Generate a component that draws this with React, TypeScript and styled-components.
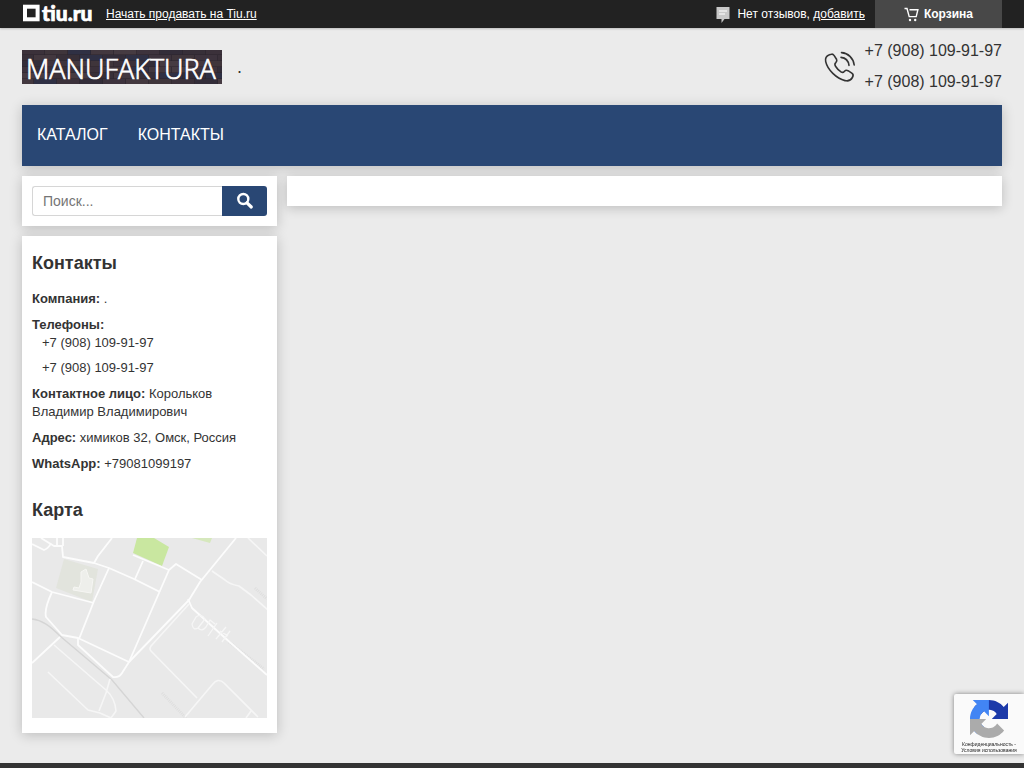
import React from 'react';
import styled, { createGlobalStyle } from 'styled-components';

const GlobalStyle = createGlobalStyle`
  *, *::before, *::after { box-sizing: border-box; }
  body {
    margin: 0;
    background: #ebebeb;
    color: #333;
    font: 13px/18px "Liberation Sans", Arial, sans-serif;
  }
  h2, p, ul { margin: 0; padding: 0; }
  ul { list-style: none; }
  svg { display: block; flex: none; overflow: visible; }
`;

const Page = styled.div`
  display: flex;
  flex-direction: column;
  min-height: 100vh;
`;

const TopBar = styled.div`
  display: flex;
  align-items: center;
  height: 28px;
  padding: 0 22px;
  background: #222;
  color: #fff;
  font-size: 12px;
  box-shadow: 0 1px 2px rgba(0, 0, 0, 0.2);
`;

const TopLink = styled.a`
  color: #fff;
  text-decoration: underline;
`;

const PortalLink = styled.a`
  margin-right: 12px;
`;

const Reviews = styled.div`
  display: flex;
  align-items: center;
  gap: 7px;
  margin-left: auto;
  margin-right: 10px;
`;

const Basket = styled.button`
  display: flex;
  align-items: center;
  justify-content: center;
  gap: 5px;
  width: 127px;
  height: 28px;
  padding: 0;
  border: 0;
  background: #484848;
  color: #fff;
  font: bold 12px "Liberation Sans", Arial, sans-serif;
`;

const Container = styled.div`
  flex: 1;
  padding: 0 22px 30px;
`;

const Header = styled.header`
  display: flex;
  align-items: center;
  height: 77px;
`;

const CompanyName = styled.span`
  margin-left: 15px;
  font-size: 18px;
  line-height: 20px;
`;

const HeaderPhones = styled.div`
  display: flex;
  align-items: center;
  gap: 9px;
  margin-left: auto;
  font-size: 16px;
  line-height: 31px;
`;

const HeaderPhoneList = styled.ul`
  padding-bottom: 2px;
`;

const Nav = styled.nav`
  display: flex;
  height: 61px;
  background: #294774;
  box-shadow: 0 2px 12px rgba(0, 0, 0, 0.2);
`;

const NavLink = styled.a`
  padding: 0 15px;
  color: #fff;
  font-size: 16px;
  line-height: 60px;
  text-decoration: none;
  text-transform: uppercase;
`;

const Columns = styled.div`
  display: flex;
  align-items: flex-start;
  gap: 10px;
  margin-top: 10px;
`;

const Sidebar = styled.aside`
  display: flex;
  flex-direction: column;
  gap: 10px;
  flex: 0 0 255px;
  min-width: 0;
`;

const Card = styled.section`
  padding: 10px;
  background: #fff;
  box-shadow: 0 2px 12px rgba(0, 0, 0, 0.2);
`;

const Content = styled.main`
  flex: 1;
  min-height: 30px;
  background: #fff;
  box-shadow: 0 2px 12px rgba(0, 0, 0, 0.2);
`;

const SearchForm = styled.form`
  display: flex;
  height: 30px;
`;

const SearchInput = styled.input`
  flex: 1;
  min-width: 0;
  padding: 0 10px;
  border: 1px solid #d6d6d6;
  border-right: 0;
  border-radius: 3px 0 0 3px;
  font: 14px "Liberation Sans", Arial, sans-serif;
  &::placeholder { color: #757575; }
`;

const SearchButton = styled.button`
  display: flex;
  align-items: center;
  justify-content: center;
  width: 45px;
  padding: 0;
  border: 0;
  border-radius: 0 3px 3px 0;
  background: #294774;
`;

const InfoCard = styled(Card)`
  padding-bottom: 15px;
`;

const Title = styled.h2`
  padding: 5px 0;
  font-size: 18px;
  line-height: 24px;
`;

const Details = styled.div`
  display: flex;
  flex-direction: column;
  gap: 8px;
  padding: 10px 0 20px;
`;

const PhoneList = styled.ul`
  display: flex;
  flex-direction: column;
  gap: 7px;
  padding-left: 10px;
`;

const MapBox = styled.div`
  margin-top: 11px;
  overflow: hidden;
  svg { width: 100%; height: 180px; }
`;

const Footer = styled.footer`
  height: 5px;
  background: #333;
`;

const Captcha = styled.div`
  position: fixed;
  right: 0;
  bottom: 14px;
  display: flex;
  flex-direction: column;
  align-items: center;
  width: 70px;
  height: 60px;
  padding-top: 6px;
  border-radius: 2px 0 0 2px;
  background: #fafafa;
  box-shadow: 0 0 5px #808080;
`;

const CaptchaTerms = styled.div`
  margin-top: 3px;
  font: 5px/6px "Liberation Sans", Arial, sans-serif;
  text-align: center;
  white-space: nowrap;
  color: #222;
`;

const TiuLogo = () => (
  <svg width="72" height="28" viewBox="0 0 72 28" role="img" aria-label="tiu.ru">
    <rect x="3" y="6.7" width="12.6" height="12.6" fill="none" stroke="#fff" strokeWidth="4" />
    <text x="20" y="21" fill="#fff" stroke="#fff" strokeWidth="0.7" fontFamily="Lato, sans-serif" fontWeight="900" fontSize="21">tiu.ru</text>
  </svg>
);

const brickColors = ['#3b313a', '#43383f', '#332d39', '#3f353b', '#463b42', '#372f38', '#2f3044', '#3d333d'];

const ShopLogo = () => (
  <svg width="200" height="34" viewBox="0 0 200 34" role="img" aria-label="Manufaktura">
    <clipPath id="wall"><rect width="200" height="34" /></clipPath>
    <g clipPath="url(#wall)">
      <rect width="200" height="34" fill="#2c252d" />
      {Array.from({ length: 6 }, (_, row) =>
        Array.from({ length: 10 }, (_, col) => (
          <rect
            key={`${row}-${col}`}
            x={col * 23 - (row % 2) * 11}
            y={row * 6 - 1}
            width="22.4"
            height="5.5"
            fill={brickColors[(row * 5 + col * 3 + ((row * col) % 3)) % brickColors.length]}
          />
        )),
      )}
    </g>
    <text x="4" y="29" fill="#fff" fontFamily="'Open Sans', 'Noto Sans', sans-serif" fontWeight="300" fontSize="27" stroke="#fff" strokeWidth="0.7">MANUFAKTURA</text>
  </svg>
);

const BubbleIcon = () => (
  <svg width="14" height="18" viewBox="0 0 14 18" aria-hidden="true">
    <path d="M0.5 2H13.5V14H8.5L5.5 18V14H0.5z" fill="#c8c8c8" />
    <path d="M3 6h8M3 9h6" stroke="#fff" strokeWidth="1.2" />
  </svg>
);

const CartIcon = () => (
  <svg width="15" height="15" viewBox="0 0 15 15" fill="none" stroke="#fff" aria-hidden="true">
    <path d="M0.5 1.5H3L5.2 9.6H12.2L13.9 2.7H5.5" strokeWidth="1.4" />
    <circle cx="6" cy="13" r="1.2" fill="#fff" stroke="none" />
    <circle cx="11.2" cy="13" r="1.2" fill="#fff" stroke="none" />
  </svg>
);

const PhoneIcon = () => (
  <svg width="32" height="32" viewBox="0 0 32 32" fill="none" stroke="#333" strokeWidth="1.6" strokeLinecap="round" strokeLinejoin="round" aria-hidden="true">
    <path d="M7.5 3.2C8.6 3 9.5 3.6 10.2 4.6L12.5 8.2C13.3 9.8 12.8 10.8 11.8 11.7C10.4 12.9 10.6 13.8 11.5 15.2C13 17.6 15 19.7 17.3 21.1C18.5 21.8 19.4 21.5 20.5 20.2C21.6 19 22.6 18.9 24 19.7L27.8 22.2C29.5 23.3 29.5 24.7 28.4 26.5C26.8 29.3 24.3 30.5 21 29.6C12.5 27.6 3.5 18.8 1.7 10.7C1 7.3 2.4 4.8 5.4 3.7C6.1 3.4 6.8 3.2 7.5 3.2Z" />
    <path d="M17.5 1.6C24 2 29.4 7 30.2 14M17 6.4C21.2 6.8 24.4 9.9 25 14.4" />
  </svg>
);

const SearchIcon = () => (
  <svg width="16" height="16" viewBox="0 0 16 16" fill="none" stroke="#fff" aria-hidden="true">
    <circle cx="6.3" cy="6" r="5" strokeWidth="2.4" />
    <path d="M10 9.8l4.3 4.2" strokeWidth="3.2" strokeLinecap="round" />
  </svg>
);

const CityMap = () => (
  <svg viewBox="0 0 235 180" preserveAspectRatio="xMidYMid slice" role="img" aria-label="Карта">
    <rect width="235" height="180" fill="#e9e9e9" />
    <path d="M105 0h17l15 9-7 19-29-13z" fill="#c9e7a0" />
    <path d="M160 0h20l-2 5z" fill="#d6e8bd" />
    <path d="M32 21L66 31 60 64 24 50z" fill="#e2e4dd" />
    <path d="M49 34l5-3 3 9 4 1-2 14-18-3 1-3 5 1 2-6z" fill="#eeefeb" stroke="#f6f6f3" />
    <path d="M0 81C10 82 18 88 28 98L80 142 112 180" fill="none" stroke="#d5d5d5" strokeWidth="1.4" />
    <path d="M130 155l24 25M223 50l12 11M197 104l35 27" fill="none" stroke="#dedede" strokeWidth="3" strokeDasharray="1 1" />
    <g fill="none" stroke="#fcfcfc" strokeWidth="1.8" strokeLinejoin="round">
      <path d="M0 6l12 6q5-2 7-7M9 0l13 8h8l1 11 31 6 15 5 25 11 26 13" />
      <path d="M25 0v7M31 0v8M80 0L66 18 62 25M77 30L62 63 47 101M62 65L20 54 0 44M20 54Q12 71 14 79L30 97 46 100 97 124" />
      <path d="M46 101v6L81 139q6 1 9-4l7-11 40-92 7-6 26 16" />
      <path d="M111 23l-8 18M101 17l36 15M28 99L0 125M97 124l60-62 11-18 36-44" />
      <path d="M156 61l4 9 32 29 43 38" />
    </g>
    <g fill="none" stroke="#f6f6f6" strokeWidth="1.6" strokeLinejoin="round">
      <path d="M157 66l-38 42q-2 3 0 5l46 47M153 179l27-32q6-8 12-2l34 34M214 180l5-7" />
      <path d="M180 33l13 9q4 4 14 6l12 9 17 15M216 0l19 18" />
      <path d="M22 107l52 45q9 8 10 21l-5 7-11-5-12-3-40-38M78 141l-4 14-7 18" />
      <path d="M164 79l-4 7q1 7 6 4l7-9q-4-6-9-2zM166 90q4 4 8-1l4-7 5 4M176 98l9-13M184 101l10-12M188 93l8 5M190 104l8-11" strokeWidth="1.3" />
    </g>
  </svg>
);

const CaptchaLogo = () => (
  <svg width="38" height="38" viewBox="0 0 64 64" aria-hidden="true">
    <path fill="#1c3aa9" d="M64 31.955l-.033-1.37V4.687l-7.16 7.16C50.948 4.674 42.033.093 32.05.093c-10.4 0-19.622 4.96-25.458 12.64l11.736 11.86a15.55 15.55 0 0 1 4.754-5.334c2.05-1.6 4.952-2.906 8.968-2.906.485 0 .86.057 1.135.163 4.976.393 9.288 3.14 11.828 7.124l-8.307 8.307L64 31.953" />
    <path fill="#4285f4" d="M31.862.094l-1.37.033H4.594l7.16 7.16C4.58 13.147 0 22.06 0 32.046c0 10.4 4.96 19.622 12.64 25.458L24.5 45.768a15.55 15.55 0 0 1-5.334-4.754c-1.6-2.05-2.906-4.952-2.906-8.968 0-.485.057-.86.163-1.135.393-4.976 3.14-9.288 7.124-11.828l8.307 8.307L31.86.095" />
    <path fill="#ababab" d="M.001 32.045l.033 1.37v25.898l7.16-7.16c5.86 7.173 14.774 11.754 24.76 11.754 10.4 0 19.622-4.96 25.458-12.64l-11.736-11.86a15.55 15.55 0 0 1-4.754 5.334c-2.05 1.6-4.952 2.906-8.968 2.906-.485 0-.86-.057-1.135-.163-4.976-.393-9.288-3.14-11.828-7.124l8.307-8.307c-10.522.04-22.4.066-27.295-.005" />
  </svg>
);

const phones = ['+7 (908) 109-91-97', '+7 (908) 109-91-97'];

export default function App() {
  return (
    <Page>
      <GlobalStyle />
      <TopBar>
        <PortalLink href="#"><TiuLogo /></PortalLink>
        <TopLink href="#">Начать продавать на Tiu.ru</TopLink>
        <Reviews>
          <BubbleIcon />
          <span>Нет отзывов, <TopLink href="#">добавить</TopLink></span>
        </Reviews>
        <Basket type="button"><CartIcon />Корзина</Basket>
      </TopBar>
      <Container>
        <Header>
          <a href="#"><ShopLogo /></a>
          <CompanyName>.</CompanyName>
          <HeaderPhones>
            <PhoneIcon />
            <HeaderPhoneList>{phones.map((phone, i) => <li key={i}>{phone}</li>)}</HeaderPhoneList>
          </HeaderPhones>
        </Header>
        <Nav>
          <NavLink href="#">Каталог</NavLink>
          <NavLink href="#">Контакты</NavLink>
        </Nav>
        <Columns>
          <Sidebar>
            <Card>
              <SearchForm role="search">
                <SearchInput type="text" placeholder="Поиск..." aria-label="Поиск" />
                <SearchButton type="button" aria-label="Найти"><SearchIcon /></SearchButton>
              </SearchForm>
            </Card>
            <InfoCard>
              <Title>Контакты</Title>
              <Details>
                <p><b>Компания:</b> .</p>
                <div>
                  <b>Телефоны:</b>
                  <PhoneList>{phones.map((phone, i) => <li key={i}>{phone}</li>)}</PhoneList>
                </div>
                <p><b>Контактное лицо:</b> Корольков Владимир Владимирович</p>
                <p><b>Адрес:</b> химиков 32, Омск, Россия</p>
                <p><b>WhatsApp:</b> +79081099197</p>
              </Details>
              <Title>Карта</Title>
              <MapBox><CityMap /></MapBox>
            </InfoCard>
          </Sidebar>
          <Content />
        </Columns>
      </Container>
      <Footer />
      <Captcha>
        <CaptchaLogo />
        <CaptchaTerms>Конфиденциальность -<br />Условия использования</CaptchaTerms>
      </Captcha>
    </Page>
  );
}
